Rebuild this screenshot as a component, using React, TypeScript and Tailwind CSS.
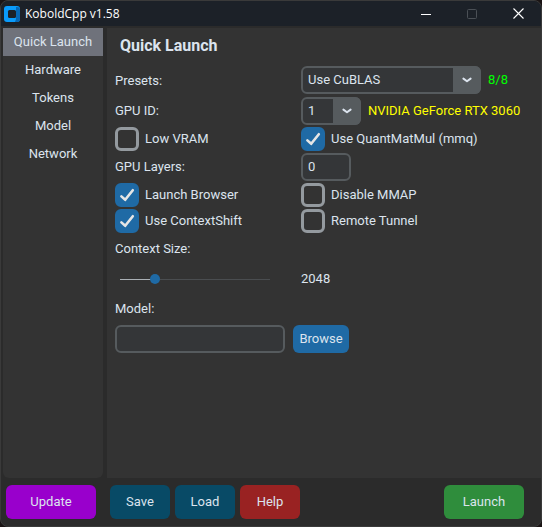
import { useState } from "react";
import type { ReactNode } from "react";

const TABS = ["Quick Launch", "Hardware", "Tokens", "Model", "Network"];

function Checkbox({ label, checked = false }: { label: string; checked?: boolean }) {
  return (
    <label className="flex h-6 items-center">
      <span className="relative size-6 shrink-0">
        <input
          type="checkbox"
          defaultChecked={checked}
          className="peer block size-6 appearance-none rounded-md border-3 border-[#949a9f] checked:border-[#1f6aa5] checked:bg-[#1f6aa5]"
        />
        <svg
          viewBox="0 0 24 24"
          className="pointer-events-none absolute inset-0 hidden size-6 peer-checked:block"
          fill="none"
          stroke="#e5e5e5"
          strokeWidth="2.6"
          strokeLinecap="round"
          strokeLinejoin="round"
        >
          <path d="M6.4 13.4 10.2 16.8 17.8 7.2" />
        </svg>
      </span>
      <span className="ml-1.5">{label}</span>
    </label>
  );
}

function Dropdown({ id, options, className }: { id: string; options: string[]; className: string }) {
  return (
    <span className={"relative h-7 shrink-0 " + className}>
      <select
        id={id}
        className="block h-7 w-full appearance-none rounded-md border-2 border-[#565b5e] bg-[#343638] pl-[5px] text-[13px] outline-none"
      >
        {options.map((o) => (
          <option key={o}>{o}</option>
        ))}
      </select>
      <span className="pointer-events-none absolute inset-y-0 right-0 flex w-7 items-center justify-center rounded-r-md bg-[#565b5e]">
        <svg width="10" height="6" viewBox="0 0 10 6" fill="none" stroke="#dce4ee" strokeWidth="2" strokeLinecap="round" strokeLinejoin="round">
          <path d="M1.4 1.6 5 4.2 8.6 1.6" />
        </svg>
      </span>
    </span>
  );
}

function ActionButton({ children, className }: { children: ReactNode; className: string }) {
  return <button className={"h-[34px] rounded-md " + className}>{children}</button>;
}

export default function App() {
  const [tab, setTab] = useState(TABS[0]);
  const [context, setContext] = useState(3);

  return (
    <div className="bg-[#1a1414]">
      <div className="flex min-h-screen flex-col overflow-hidden rounded-lg border border-[#3a3a3a] bg-[#2b2b2b] font-[Roboto,'Liberation_Sans',sans-serif] text-[13px] leading-4 text-[#dce4ee]">
        <header className="flex h-[25px] items-center bg-[#1c2128] pl-[3px]">
          <svg width="16" height="16" viewBox="0 0 16 16">
            <rect width="16" height="16" rx="3" fill="#0a9bfb" />
            <path d="M12 1h1a3 3 0 0 1 3 3v9a3 3 0 0 1-3 3h-2l1-3z" fill="#0767b4" />
            <rect x="4" y="4" width="8" height="8" rx="1.5" fill="#1c2128" />
          </svg>
          <h1 className="ml-[5px] font-['Open_Sans','Noto_Sans',sans-serif] text-xs text-white">KoboldCpp v1.58</h1>
          <div className="ml-auto flex">
            <button aria-label="Minimize" className="flex h-6 w-[46px] items-center justify-center">
              <svg width="10" height="10" viewBox="0 0 10 10" stroke="#ffffff">
                <path d="M0 5.5h10" />
              </svg>
            </button>
            <button aria-label="Maximize" disabled className="flex h-6 w-[46px] items-center justify-center">
              <svg width="10" height="10" viewBox="0 0 10 10" stroke="#4b5056" fill="none">
                <rect x=".5" y=".5" width="9" height="9" rx="1" />
              </svg>
            </button>
            <button aria-label="Close" className="flex h-6 w-[46px] items-center justify-center">
              <svg width="11" height="11" viewBox="0 0 11 11" stroke="#ffffff" strokeWidth="1.1">
                <path d="M.5.5l10 10M10.5.5l-10 10" />
              </svg>
            </button>
          </div>
        </header>

        <div className="flex grow gap-1 pt-0.5 pl-0.5">
          <nav className="flex w-[100px] shrink-0 flex-col rounded-b-md bg-[#333333]">
            {TABS.map((t) => (
              <button key={t} onClick={() => setTab(t)} className={"h-7 " + (t === tab ? "bg-[#6f727b]" : "")}>
                {t}
              </button>
            ))}
          </nav>

          <main className="grow bg-[#333333] pl-2">
            <h2 className="mt-2 mb-2.5 ml-[5px] text-base leading-5 font-bold">Quick Launch</h2>

            <form className="grid grid-cols-[186px_1fr] items-center gap-y-0.5" onSubmit={(e) => e.preventDefault()}>
              <label htmlFor="preset">Presets:</label>
              <div className="flex items-center gap-[7px] pb-px">
                <Dropdown id="preset" className="w-[180px]" options={["Use CuBLAS", "Use OpenBLAS", "Use CLBlast"]} />
                <span className="text-[#00ff00]">8/8</span>
              </div>

              <label htmlFor="gpu">GPU ID:</label>
              <div className="flex items-center gap-[7px]">
                <Dropdown id="gpu" className="w-[60px]" options={["1", "2", "3", "4", "All"]} />
                <span className="whitespace-nowrap text-[#ffff00]">NVIDIA GeForce RTX 3060</span>
              </div>

              <Checkbox label="Low VRAM" />
              <Checkbox label="Use QuantMatMul (mmq)" checked />

              <label htmlFor="layers">GPU Layers:</label>
              <input
                id="layers"
                defaultValue="0"
                className="h-7 w-[50px] rounded-md border-2 border-[#565b5e] bg-[#343638] px-[5px] pb-0.5 outline-none"
              />

              <Checkbox label="Launch Browser" checked />
              <Checkbox label="Disable MMAP" />
              <Checkbox label="Use ContextShift" checked />
              <Checkbox label="Remote Tunnel" />

              <label htmlFor="context" className="col-span-2 flex h-7 items-center">
                Context Size:
              </label>
              <input
                id="context"
                type="range"
                min={0}
                max={14}
                value={context}
                onChange={(e) => setContext(Number(e.target.value))}
                className="ml-[5px] h-7 w-[150px] appearance-none bg-[linear-gradient(to_right,#aab0b5_35px,#4a4d50_35px)] bg-[length:100%_1px] bg-center bg-no-repeat [&::-webkit-slider-thumb]:size-2.5 [&::-webkit-slider-thumb]:appearance-none [&::-webkit-slider-thumb]:rounded-full [&::-webkit-slider-thumb]:bg-[#1f6aa5]"
              />
              <output htmlFor="context">2048</output>

              <label htmlFor="model" className="col-span-2 flex h-7 items-center">
                Model:
              </label>
              <div className="col-span-2 flex gap-2">
                <input
                  id="model"
                  className="h-7 w-[170px] rounded-md border-2 border-[#565b5e] bg-[#343638] px-[5px] outline-none"
                />
                <button className="h-7 w-14 rounded-md bg-[#1f6aa5]">Browse</button>
              </div>
            </form>
          </main>
        </div>

        <footer className="flex h-12 items-center gap-[5px] pr-[17px] pl-[5px]">
          <ActionButton className="mr-[9px] w-[90px] bg-[#9900cc]">Update</ActionButton>
          <ActionButton className="w-[60px] bg-[#084a66]">Save</ActionButton>
          <ActionButton className="w-[60px] bg-[#084a66]">Load</ActionButton>
          <ActionButton className="w-[60px] bg-[#992222]">Help</ActionButton>
          <ActionButton className="ml-auto w-20 bg-[#2f8d3c]">Launch</ActionButton>
        </footer>
      </div>
    </div>
  );
}
